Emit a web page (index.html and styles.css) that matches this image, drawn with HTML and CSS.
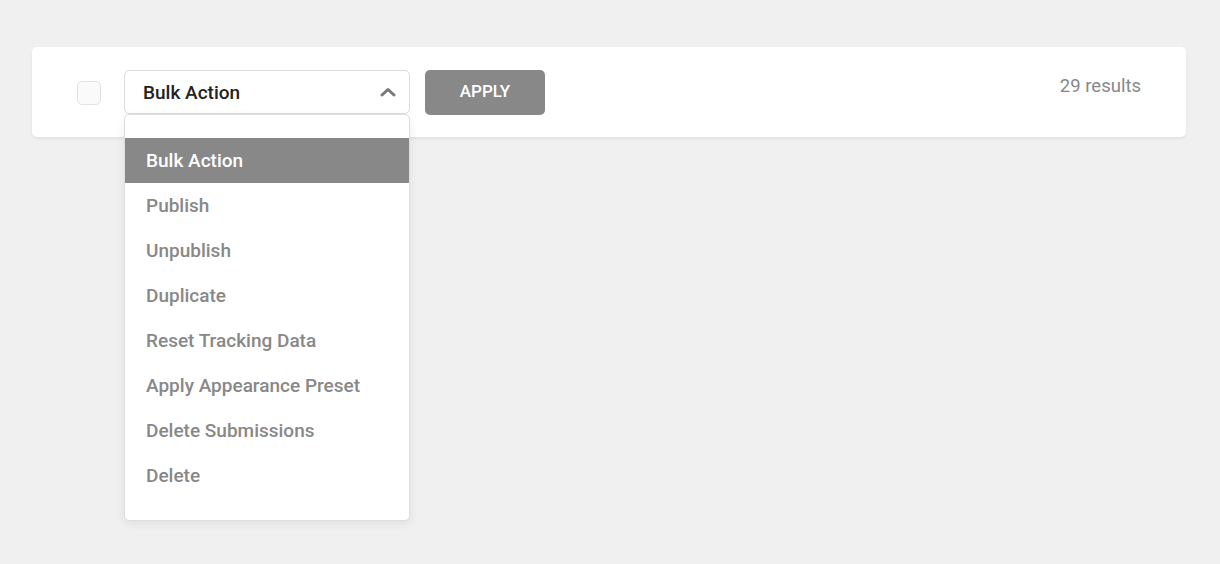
FILE: index.html
```html
<!DOCTYPE html>
<html lang="en">
<head>
<meta charset="utf-8">
<title>Bulk Action</title>
<link rel="stylesheet" href="styles.css">
</head>
<body>
<div class="page">
  <div class="toolbar">
    <div class="left">
      <span class="checkbox"></span>
      <div class="select-wrap">
        <div class="select">
          <span class="select-value">Bulk Action</span>
          <svg class="chevron" width="16" height="10" viewBox="0 0 16 10"><path d="M2 8 L8 2.5 L14 8" fill="none" stroke="#777" stroke-width="3" stroke-linecap="round" stroke-linejoin="round"/></svg>
        </div>
        <ul class="menu">
          <li class="item active">Bulk Action</li>
          <li class="item">Publish</li>
          <li class="item">Unpublish</li>
          <li class="item">Duplicate</li>
          <li class="item">Reset Tracking Data</li>
          <li class="item">Apply Appearance Preset</li>
          <li class="item">Delete Submissions</li>
          <li class="item">Delete</li>
        </ul>
      </div>
      <button class="apply">APPLY</button>
    </div>
    <div class="results">29 results</div>
  </div>
</div>
</body>
</html>
```

FILE: styles.css
```css
* { box-sizing: border-box; }
html, body {
  margin: 0;
  padding: 0;
  min-height: 564px;
  background: #f0f0f0;
  font-family: Roboto, "Liberation Sans", sans-serif;
}
.page {
  padding: 47px 34px 0 32px;
}
.toolbar {
  position: relative;
  background: #fff;
  border-radius: 5px;
  height: 90px;
  padding: 0 45px;
  display: flex;
  align-items: center;
  justify-content: space-between;
  box-shadow: 0 2px 3px rgba(0,0,0,0.06);
}
.left {
  display: flex;
  align-items: center;
}
.checkbox {
  width: 24px;
  height: 24px;
  border: 1px solid #e2e2e2;
  border-radius: 5px;
  background: #fafafa;
  margin-right: 23px;
  margin-top: 1px;
}
.select-wrap {
  position: relative;
  z-index: 5;
  width: 286px;
  margin-right: 15px;
}
.select {
  height: 44px;
  border: 1px solid #dcdcdc;
  border-radius: 5px;
  display: flex;
  align-items: center;
  justify-content: space-between;
  padding: 0 13px 0 18px;
  background: #fff;
}
.select-value {
  font-size: 19px;
  font-weight: 500;
  color: #222;
}
.chevron { display: block; }
.menu {
  position: absolute;
  z-index: 10;
  left: 0;
  top: 44px;
  width: 286px;
  margin: 0;
  padding: 23px 0 22px;
  list-style: none;
  background: #fff;
  border: 1px solid #dedede;
  border-radius: 5px;
  box-shadow: 0 3px 10px rgba(0,0,0,0.07);
}
.item {
  display: block;
  height: 45px;
  line-height: 46px;
  padding-left: 21px;
  font-size: 19px;
  font-weight: 500;
  color: #888;
}
.item.active {
  background: #888;
  color: #fff;
}
.apply {
  width: 120px;
  height: 45px;
  border: 0;
  border-radius: 5px;
  background: #888;
  color: #fff;
  font-family: Roboto, "Liberation Sans", sans-serif;
  font-size: 17px;
  font-weight: 500;
  padding: 0 0 3px;
  margin-top: 1px;
}
.results {
  font-size: 18.5px;
  color: #888;
  margin-bottom: 13px;
}
```
